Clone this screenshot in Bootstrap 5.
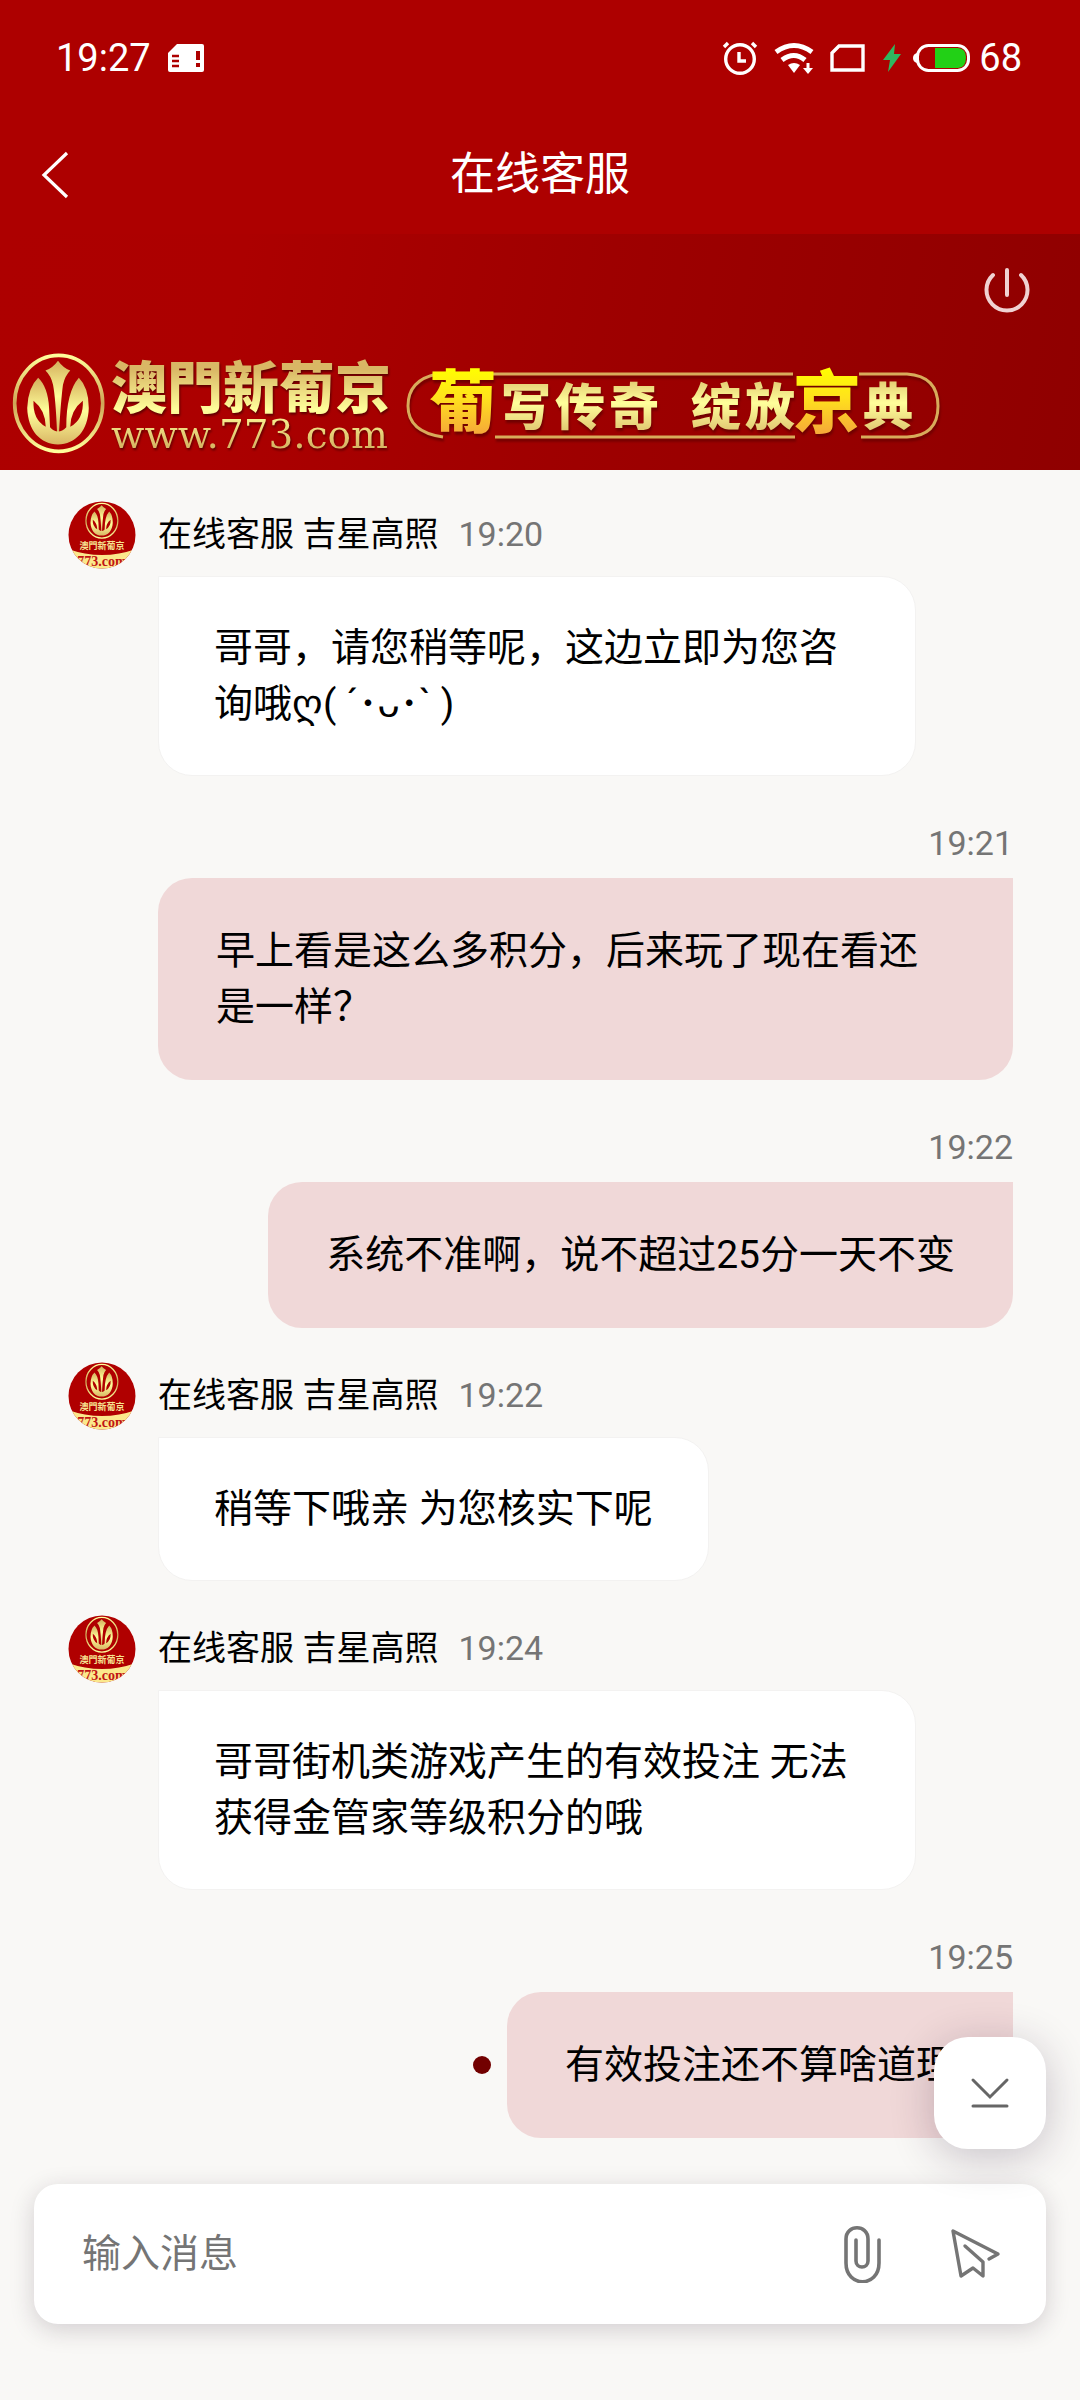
<!DOCTYPE html>
<html lang="zh-CN">
<head>
<meta charset="utf-8">
<meta name="viewport" content="width=device-width, initial-scale=1">
<title>在线客服</title>
<link href="https://cdn.jsdelivr.net/npm/bootstrap@5.3.0/dist/css/bootstrap.min.css" rel="stylesheet">
<style>
body{background:#f9f8f6;color:#000;font-family:Roboto,"Noto Sans CJK SC",sans-serif;font-size:39px;line-height:56px}
svg{display:block;flex:none}
.top-area{background:#ad0000;color:#fff}
.status-bar{padding:30px 58px 0 56px;line-height:56px;font-size:38px}
.title-bar{height:148px;padding-top:30px;display:grid;grid-template-columns:120px 1fr 120px;align-items:center}
.title-bar h1{font-size:45px;line-height:60px;font-weight:400;margin:0;text-align:center}
.plain-btn{background:none;border:0;padding:0;color:inherit;line-height:0}
.back-btn{padding-left:40px}
.battery{margin:0 8px 0 11px}
.banner{background:linear-gradient(100deg,#ad0000 0%,#ac0000 22%,#9e0000 55%,#8f0000 100%);height:236px;padding:32px 48px 14px 12px}
.power-btn{color:#f0d2d2}
.gold{background:linear-gradient(#d9b765 15%,#ffff9b 55%,#d9b765 90%);-webkit-background-clip:text;background-clip:text;color:transparent;filter:drop-shadow(1px 2px 1px #600000)}
.brand-text{margin-left:5px}
.brand-name{font:900 56px/60px "Noto Sans CJK TC",sans-serif}
.brand-url{font:39px/42px "DejaVu Serif",serif}
.chat{padding:31px 67px 0 68px}
.msg{margin-bottom:34px}
.msg-head{height:68px;font-size:34px;line-height:66px}
.msg-head time{color:#757575}
.agent-row{display:grid;grid-template-columns:68px minmax(0,1fr);column-gap:22px}
.sender{gap:20px}
.bubble{margin:0;border-radius:34px}
.bubble-agent{background:#fff;border:1px solid #f3f2f1;border-top-left-radius:0;padding:43px 55px;margin-top:7px;width:fit-content;max-width:758px}
.bubble-user{background:#f0d8d8;border-top-right-radius:0;padding:45px 58px;max-width:855px}
.unread{width:18px;height:18px;background:#720000;margin-right:16px}
.composer-wrap{padding:46px 34px 76px}
.composer{background:#fff;border-radius:24px;height:140px;padding:0 44px 0 48px;box-shadow:0 6px 24px rgba(40,20,40,.18)}
.composer input{border:0;outline:0;background:none;min-width:0;height:64px;line-height:60px;color:#000}
.composer input::placeholder{color:#757575;opacity:1}
.tool-btn{color:#757575}
.tool-btn + .tool-btn{margin-left:68px}
.jump-btn{position:absolute;right:34px;top:-101px;width:112px;height:112px;border-radius:34px;background:#fff;border:0;box-shadow:0 8px 44px rgba(40,20,50,.24);color:#666}
</style>
<script src="https://cdn.jsdelivr.net/npm/bootstrap@5.3.0/dist/js/bootstrap.bundle.min.js"></script>
</head>
<body>
<svg width="0" height="0" class="position-absolute" aria-hidden="true">
  <defs>
    <linearGradient id="goldFill" x1="0" y1="0" x2="0" y2="1"><stop offset="0" stop-color="#d4af5c"/><stop offset=".5" stop-color="#ffff9b"/><stop offset="1" stop-color="#d9b765"/></linearGradient>
    <linearGradient id="goldRing" x1="0" y1="0" x2="0" y2="1"><stop offset="0" stop-color="#ffff9b"/><stop offset=".5" stop-color="#cfa556"/><stop offset="1" stop-color="#ffff9b"/></linearGradient>
    <linearGradient id="brightFill" x1="0" y1="0" x2="0" y2="1"><stop offset=".2" stop-color="#ffff00"/><stop offset=".5" stop-color="#ffe21c"/><stop offset=".9" stop-color="#f5a33c"/></linearGradient>
    <symbol id="emblem" viewBox="36 38 284 312">
      <ellipse cx="177" cy="192" rx="133" ry="145" fill="none" stroke="url(#goldRing)" stroke-width="11"/>
      <path fill="url(#goldFill)" d="M175 63Q190 84 212 93Q196 109 190 136Q184 180 178 279H172Q168 180 160 136Q154 109 137 93Q160 84 175 63Z"/>
      <path fill="url(#goldFill)" fill-rule="evenodd" d="M115 115Q144 142 148 205L151 264Q175 290 200 264Q200 158 238 115Q268 145 268 206C266 275 228 315 175 316C122 315 84 275 82 206Q84 145 115 115ZM101 184Q98 240 138 263Q137 212 101 184ZM250 184Q253 240 212 263Q213 212 250 184Z"/>
    </symbol>
    <symbol id="avatar" viewBox="0 0 68 68">
      <clipPath id="round"><circle cx="34" cy="34" r="33.5"/></clipPath>
      <g clip-path="url(#round)">
        <rect width="68" height="68" fill="#b00000"/>
        <use href="#emblem" x="17" y="1" width="34" height="38"/>
        <path d="M0 48Q34 60 68 48V68H0Z" fill="#fbe88c"/>
        <text x="34" y="48" text-anchor="middle" font-family="Noto Sans CJK TC,sans-serif" font-weight="700" font-size="9" fill="#f6e391">澳門新葡京</text>
        <text x="34" y="65" text-anchor="middle" font-family="Liberation Serif,serif" font-weight="700" font-size="14" fill="#c01414">773.com</text>
      </g>
    </symbol>
  </defs>
</svg>

<header class="top-area">
  <div class="status-bar d-flex align-items-center">
    <span>19:27</span>
    <svg class="ms-3 me-auto" width="38" height="32" viewBox="0 0 38 32"><path d="M10 2H35Q37 2 37 4V28Q37 30 35 30H3Q1 30 1 28V11Z" fill="#fff"/><path d="M5 14h7M5 19h7M5 24h7" stroke="#ad0000" stroke-width="2.5"/><path d="M31 9v9M31 21v4" stroke="#ad0000" stroke-width="4"/></svg>
    <div class="d-flex align-items-center">
      <svg width="36" height="36" viewBox="0 0 36 36" fill="none" stroke="#fff" stroke-width="3.4"><circle cx="18" cy="19" r="14.3"/><path d="M17 12v9h7M2 7l4-4M34 7l-4-4"/></svg>
      <svg class="ms-3" width="40" height="34" viewBox="0 0 40 34" fill="none" stroke="#fff" stroke-width="5"><path d="M2 11Q20-2 38 11M8 19Q20 10 31 19"/><path d="M14 24Q20 20 26 24L20 32Z" fill="#fff" stroke="none"/><path d="M34 22v7" stroke-width="3"/><path d="M29 27h10l-5 6z" fill="#fff" stroke="none"/></svg>
      <svg class="ms-3" width="36" height="30" viewBox="0 0 36 30" fill="none" stroke="#fff" stroke-width="3.4"><path d="M9 3H33V27H2V10Z"/></svg>
      <svg class="ms-3" width="20" height="30" viewBox="0 0 20 30"><path d="M13 1L1 17H8L6 29L19 11H12Z" fill="#2fb85f"/></svg>
      <svg class="battery" width="58" height="30" viewBox="0 0 58 30"><rect x="4.500" y="2.500" width="51" height="25" rx="11" fill="none" stroke="#fff" stroke-width="3"/><path d="M4 10Q0 11 0 15T4 20Z" fill="#fff"/><path d="M22 5H45Q53 6 53 14Q53 25 45 25H22Z" fill="#22d016"/></svg>
      <span>68</span>
    </div>
  </div>
  <div class="title-bar">
    <button class="plain-btn back-btn" type="button" aria-label="返回"><svg width="30" height="48" viewBox="0 0 30 48" fill="none" stroke="#fff" stroke-width="3.2"><path d="M27 2L4 24L27 46"/></svg></button>
    <h1>在线客服</h1>
  </div>
</header>

<section class="banner d-flex flex-column justify-content-between">
  <button class="plain-btn power-btn align-self-end" type="button" aria-label="结束会话"><svg width="50" height="48" viewBox="0 0 50 48" fill="none" stroke="currentColor" stroke-width="4" stroke-linecap="round"><path d="M25 4V29M11 9A20.500 20.500 0 1 0 39 9"/></svg></button>
  <div class="d-flex align-items-end">
    <svg width="94" height="104"><use href="#emblem"/></svg>
    <div class="gold brand-text text-nowrap">
      <div class="brand-name">澳門新葡京</div>
      <div class="brand-url">www.773.com</div>
    </div>
    <svg class="ms-2" width="548" height="116" viewBox="400 340 548 116" role="img" aria-label="葡写传奇 绽放京典" style="filter:drop-shadow(1px 3px 1px #700000)">
      <g fill="none" stroke="#d8ab5b" stroke-width="3"><path d="M438 374Q409 380 409 406T444 437M492 374H794M860 374H908Q939 376 939 406T908 437H862M496 437H796"/></g>
      <g font-family="Noto Sans CJK SC,sans-serif" font-weight="900">
        <g font-size="50" fill="url(#goldFill)"><text x="502" y="425">写</text><text x="556" y="425">传</text><text x="610" y="425">奇</text><text x="692" y="425">绽</text><text x="746" y="425">放</text><text x="864" y="425">典</text></g>
        <g font-size="68" fill="url(#brightFill)"><text x="430" y="427">葡</text><text x="794" y="427">京</text></g>
      </g>
    </svg>
  </div>
</section>

<main class="chat d-flex flex-column">
  <article class="msg agent-row">
    <svg width="68" height="68"><use href="#avatar"/></svg>
    <div>
      <div class="msg-head sender d-flex"><span>在线客服 吉星高照</span><time>19:20</time></div>
      <p class="bubble bubble-agent">哥哥，请您稍等呢，这边立即为您咨询哦ღ( ´･ᴗ･` )</p>
    </div>
  </article>
  <article class="msg d-flex flex-column align-items-end">
    <div class="msg-head"><time>19:21</time></div>
    <p class="bubble bubble-user">早上看是这么多积分，后来玩了现在看还是一样？</p>
  </article>
  <article class="msg d-flex flex-column align-items-end">
    <div class="msg-head"><time>19:22</time></div>
    <p class="bubble bubble-user">系统不准啊，说不超过25分一天不变</p>
  </article>
  <article class="msg agent-row">
    <svg width="68" height="68"><use href="#avatar"/></svg>
    <div>
      <div class="msg-head sender d-flex"><span>在线客服 吉星高照</span><time>19:22</time></div>
      <p class="bubble bubble-agent">稍等下哦亲 为您核实下呢</p>
    </div>
  </article>
  <article class="msg agent-row">
    <svg width="68" height="68"><use href="#avatar"/></svg>
    <div>
      <div class="msg-head sender d-flex"><span>在线客服 吉星高照</span><time>19:24</time></div>
      <p class="bubble bubble-agent">哥哥街机类游戏产生的有效投注 无法获得金管家等级积分的哦</p>
    </div>
  </article>
  <article class="d-flex flex-column align-items-end">
    <div class="msg-head"><time>19:25</time></div>
    <div class="d-flex align-items-center"><span class="unread rounded-circle"></span><p class="bubble bubble-user">有效投注还不算啥道理</p></div>
  </article>
</main>

<footer class="composer-wrap position-relative">
  <form class="composer d-flex align-items-center">
    <label class="visually-hidden" for="message">消息</label>
    <input id="message" class="flex-grow-1 p-0" type="text" placeholder="输入消息">
    <button class="plain-btn tool-btn" type="button" aria-label="添加附件"><svg width="40" height="58" viewBox="0 0 40 58" fill="none" stroke="currentColor" stroke-width="3.6" stroke-linecap="round" stroke-linejoin="round"><path d="M37 15V38C37 63 4 63 4 38V14C4-1 26-1 26 14V36C26 44 14 44 14 36V15"/></svg></button>
    <button class="plain-btn tool-btn" type="submit" aria-label="发送"><svg width="52" height="52" viewBox="0 0 52 52" fill="none" stroke="currentColor" stroke-width="3.400" stroke-linecap="round" stroke-linejoin="round"><path d="M39 31L48 26L3 3L11 48L23 40L33 48V34L15 18"/></svg></button>
  </form>
  <button class="jump-btn d-flex align-items-center justify-content-center p-0" type="button" aria-label="滚动到底部"><svg width="40" height="34" viewBox="0 0 40 34" fill="none" stroke="currentColor" stroke-width="3" stroke-linecap="round"><path d="M3 4L20 21L37 4M3 30H37"/></svg></button>
</footer>
</body>
</html>
